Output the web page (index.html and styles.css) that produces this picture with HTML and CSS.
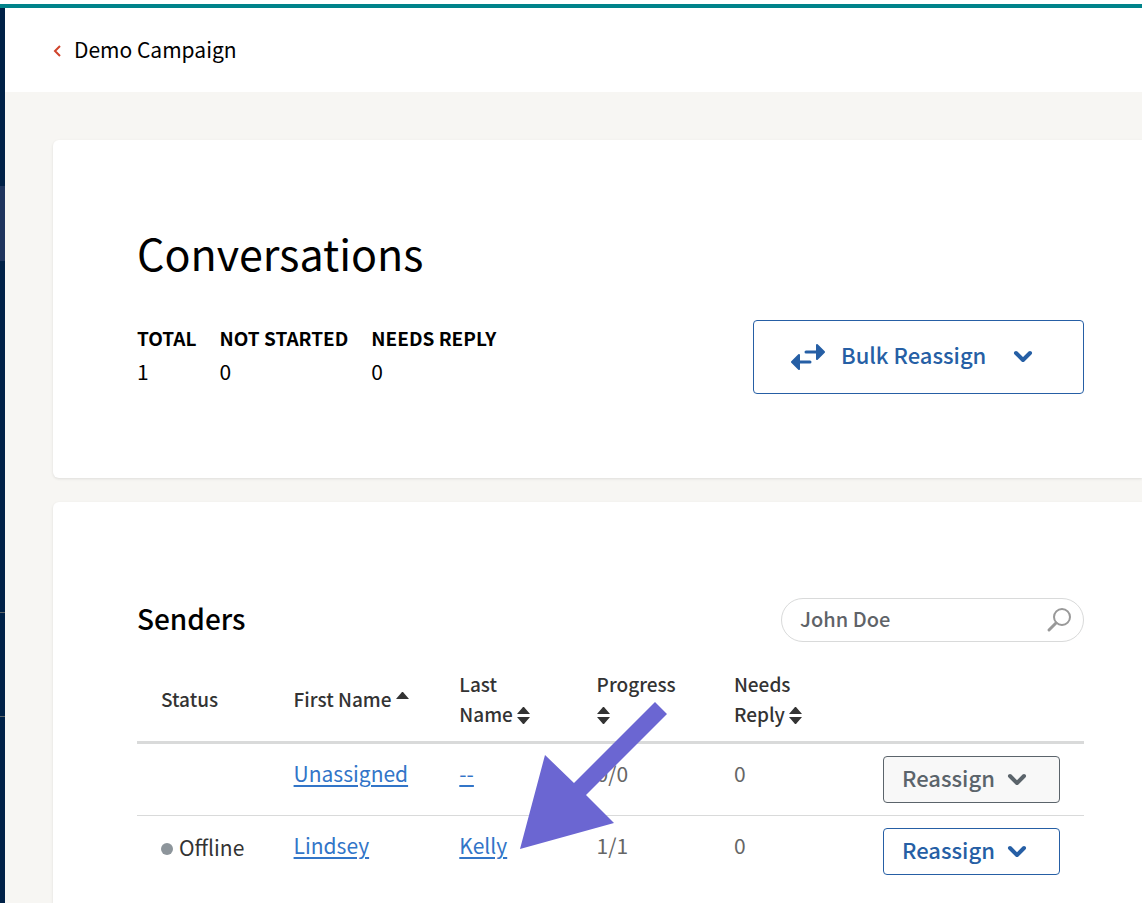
FILE: index.html
```html
<!DOCTYPE html>
<html lang="en">
<head>
	<meta charset="UTF-8">
	<meta name="viewport" content="width=device-width, initial-scale=1.0">
	<title>Demo Campaign - Conversations</title>
	<link rel="stylesheet" href="styles.css">
</head>
<body>
<div class="topbar"></div>
<div class="layout">
	<nav class="sidebar" aria-label="Main">
		<div class="side-top"></div>
		<div class="side-active"></div>
		<div class="side-group"></div>
		<div class="side-group"></div>
	</nav>
	<div class="page">
		<header class="header">
			<a class="back" href="#">
				<svg width="9" height="16" viewBox="0 0 9 16"><path d="M7 5 L2 10 L7 15" fill="none" stroke="#d0432b" stroke-width="2"/></svg>
				<span>Demo Campaign</span>
			</a>
		</header>
		<main class="content">
			<section class="card summary">
				<h1>Conversations</h1>
				<div class="summary-row">
					<dl class="stats">
						<div><dt>TOTAL</dt><dd>1</dd></div>
						<div><dt>NOT STARTED</dt><dd>0</dd></div>
						<div><dt>NEEDS REPLY</dt><dd>0</dd></div>
					</dl>
					<button class="btn btn-bulk" type="button">
						<svg width="34" height="28" viewBox="0 0 34 28" fill="#265fa5" stroke="#265fa5" stroke-linejoin="round" stroke-linecap="round">
							<path d="M15 9 H26" stroke-width="3"/>
							<path d="M26 2 L33 9 L26 16 Z" stroke-width="2"/>
							<path d="M8 19 H19" stroke-width="3"/>
							<path d="M8 12 L1 19 L8 26 Z" stroke-width="2"/>
						</svg>
						<span>Bulk Reassign</span>
						<svg class="chevron" width="20" height="14" viewBox="0 0 20 14"><path d="M3 3 L10 10 L17 3"/></svg>
					</button>
				</div>
			</section>

			<section class="card senders">
				<div class="senders-head">
					<h2>Senders</h2>
					<form class="search">
						<input type="text" placeholder="John Doe" aria-label="Search senders">
						<button type="button" aria-label="Search">
							<svg width="26" height="26" viewBox="0 0 26 26" fill="none" stroke="#999" stroke-width="2" stroke-linecap="round"><circle cx="16" cy="10" r="8"/><path d="M10 16 L3 23" stroke-width="3"/></svg>
						</button>
					</form>
				</div>
				<table class="table">
					<colgroup>
						<col class="col-status"><col class="col-first"><col class="col-last"><col class="col-progress"><col class="col-needs"><col>
					</colgroup>
					<thead>
						<tr>
							<th>Status</th>
							<th><button type="button">First Name <svg class="sort" width="13" height="17" viewBox="0 0 13 17"><path d="M0 7 L6 0 L7 0 L13 7 Z"/></svg></button></th>
							<th><button type="button">Last Name <svg class="sort" width="13" height="17" viewBox="0 0 13 17"><path d="M0 7 L6 0 L7 0 L13 7 Z M0 10 H13 L7 17 L6 17 Z"/></svg></button></th>
							<th><button type="button">Progress <svg class="sort" width="13" height="17" viewBox="0 0 13 17"><path d="M0 7 L6 0 L7 0 L13 7 Z M0 10 H13 L7 17 L6 17 Z"/></svg></button></th>
							<th><button type="button">Needs Reply <svg class="sort" width="13" height="17" viewBox="0 0 13 17"><path d="M0 7 L6 0 L7 0 L13 7 Z M0 10 H13 L7 17 L6 17 Z"/></svg></button></th>
							<th></th>
						</tr>
					</thead>
					<tbody>
						<tr>
							<td></td>
							<td><a href="#">Unassigned</a></td>
							<td><a href="#">--</a></td>
							<td>0/0</td>
							<td>0</td>
							<td class="action">
								<button class="btn btn-row btn-muted" type="button"><span>Reassign</span><svg class="chevron" width="20" height="14" viewBox="0 0 20 14"><path d="M3 3 L10 10 L17 3"/></svg></button>
							</td>
						</tr>
						<tr>
							<td class="status"><span class="dot"></span>Offline</td>
							<td><a href="#">Lindsey</a></td>
							<td><a href="#">Kelly</a></td>
							<td>1/1</td>
							<td>0</td>
							<td class="action">
								<button class="btn btn-row" type="button"><span>Reassign</span><svg class="chevron" width="20" height="14" viewBox="0 0 20 14"><path d="M3 3 L10 10 L17 3"/></svg></button>
							</td>
						</tr>
					</tbody>
				</table>
				<!-- pointer over the sender's name -->
				<svg class="pointer" width="147" height="147" viewBox="0 0 147 147"><path d="M135 0 L147 12 L66 93 L94 121 L0 147 L25 53 L54 81 Z" fill="#6b66d2"/></svg>
			</section>
		</main>
	</div>
</div>
</body>
</html>
```
FILE: styles.css
```css
*{
	box-sizing: border-box;
}
body{
	margin: 0;
	font-family: 'Noto Sans CJK SC', 'Noto Sans', sans-serif;
	font-size: 21px;
	line-height: 30px;
	color: #000;
	background-color: #fff;
}
h1, h2, dl, dd{
	margin: 0;
}
button, input{
	font-family: inherit;
}
.topbar{
	height: 8px;
	border-top: 4px solid #fff;
	background-color: #00838a;
}
.layout{
	display: flex;
	min-height: calc(100vh - 8px);
}
.sidebar{
	width: 5px;
	flex: none;
	display: flex;
	flex-direction: column;
	background-color: #002147;
}
.side-top{
	height: 178px;
}
.side-active{
	height: 75px;
	background-color: #1f355e;
}
.side-group{
	height: 104px;
	border-bottom: 1px solid #5d6468;
}
.side-active + .side-group{
	height: 352px;
}
.page{
	flex: 1;
	min-width: 0;
	display: flex;
	flex-direction: column;
}
.header{
	height: 84px;
	padding: 0 48px 2px;
	display: flex;
	align-items: center;
}
.back{
	display: flex;
	align-items: center;
	gap: 12px;
	color: #000;
	text-decoration: none;
}
.content{
	flex: 1;
	display: flex;
	flex-direction: column;
	gap: 24px;
	padding: 48px 0 0 48px;
	background-color: #f7f6f3;
}
.card{
	padding: 84px 58px 84px 84px;
	background-color: #fff;
	border-radius: 6px 0 0 6px;
	box-shadow: 0 1px 3px rgba(0, 0, 0, 0.1);
}
h1{
	font-size: 43px;
	line-height: 56px;
	font-weight: 400;
}
.summary-row{
	display: flex;
	justify-content: space-between;
	align-items: flex-start;
	padding-top: 40px;
}
.stats{
	display: flex;
	gap: 23px;
	padding-top: 3px;
}
.stats dt{
	font-size: 19px;
	font-weight: 700;
}
.stats dd{
	line-height: 36px;
}
.btn{
	display: inline-flex;
	align-items: center;
	color: #265fa5;
	background-color: #fff;
	border: 1px solid #265fa5;
	border-radius: 4px;
	font-size: 22px;
	font-weight: 500;
	line-height: 30px;
	cursor: pointer;
}
.btn span{
	padding-bottom: 6px;
}
.btn-bulk{
	width: 331px;
	height: 74px;
	padding: 0 37px;
	gap: 16px;
}
.btn-bulk .chevron{
	margin-left: 11px;
}
.chevron path{
	fill: none;
	stroke: currentColor;
	stroke-width: 4;
	stroke-linecap: round;
	stroke-linejoin: round;
}
.senders{
	flex: 1;
	position: relative;
	padding-top: 96px;
	padding-bottom: 16px;
	border-radius: 6px 0 0 0;
}
.senders-head{
	display: flex;
	justify-content: space-between;
	align-items: center;
	margin-bottom: 27px;
}
h2{
	padding-bottom: 4px;
	font-size: 28px;
	font-weight: 500;
	line-height: 36px;
}
.search{
	display: flex;
	align-items: center;
	width: 303px;
	height: 44px;
	padding: 0 11px 0 18px;
	border: 1px solid #d9dada;
	border-radius: 22px;
}
.search input{
	flex: 1;
	min-width: 0;
	padding: 0 0 3px;
	border: 0;
	outline: 0;
	background: none;
	font-size: 20px;
	font-weight: 500;
}
.search input::placeholder{
	color: #5f6368;
}
.search button{
	display: flex;
	padding: 0;
	border: 0;
	background: none;
}
.table{
	width: 100%;
	table-layout: fixed;
	border-collapse: separate;
	border-spacing: 0;
}
.col-status, .col-last, .col-progress, .col-needs{
	width: 14.5%;
}
.col-status{
	width: 14%;
}
.col-first{
	width: 17.5%;
}
.table th{
	height: 75px;
	padding: 0 20px 12px 24px;
	border-bottom: 3px solid #d9dada;
	text-align: left;
	vertical-align: middle;
	font-size: 19px;
	font-weight: 500;
	color: #333;
}
.table th button{
	padding: 0;
	border: 0;
	background: none;
	color: inherit;
	font-size: inherit;
	font-weight: inherit;
	line-height: inherit;
	text-align: left;
	cursor: pointer;
}
.sort{
	vertical-align: -2px;
	fill: #333;
}
.table td{
	height: 72px;
	padding: 11px 24px 12px;
	line-height: 36px;
	vertical-align: top;
	color: #666;
	border-bottom: 1px solid #d9dada;
}
.table tr:last-child td{
	border-bottom: 0;
}
.table td a{
	color: #3275c8;
	text-decoration-thickness: 2px;
	text-underline-offset: 3px;
}
.table .status{
	line-height: 40px;
	white-space: nowrap;
	color: #333;
}
.dot{
	display: inline-block;
	width: 12px;
	height: 12px;
	margin-right: 6px;
	border-radius: 50%;
	background-color: #8d959b;
	vertical-align: 1px;
}
.table .action{
	padding-top: 12px;
	text-align: right;
	line-height: 0;
}
.btn-row{
	width: 177px;
	height: 47px;
	padding: 0 18px;
	gap: 12px;
}
.btn-muted{
	color: #5b646b;
	border-color: #5b646b;
	background-color: #f8f8f8;
}
.pointer{
	position: absolute;
	left: 467px;
	top: 200px;
}
```
